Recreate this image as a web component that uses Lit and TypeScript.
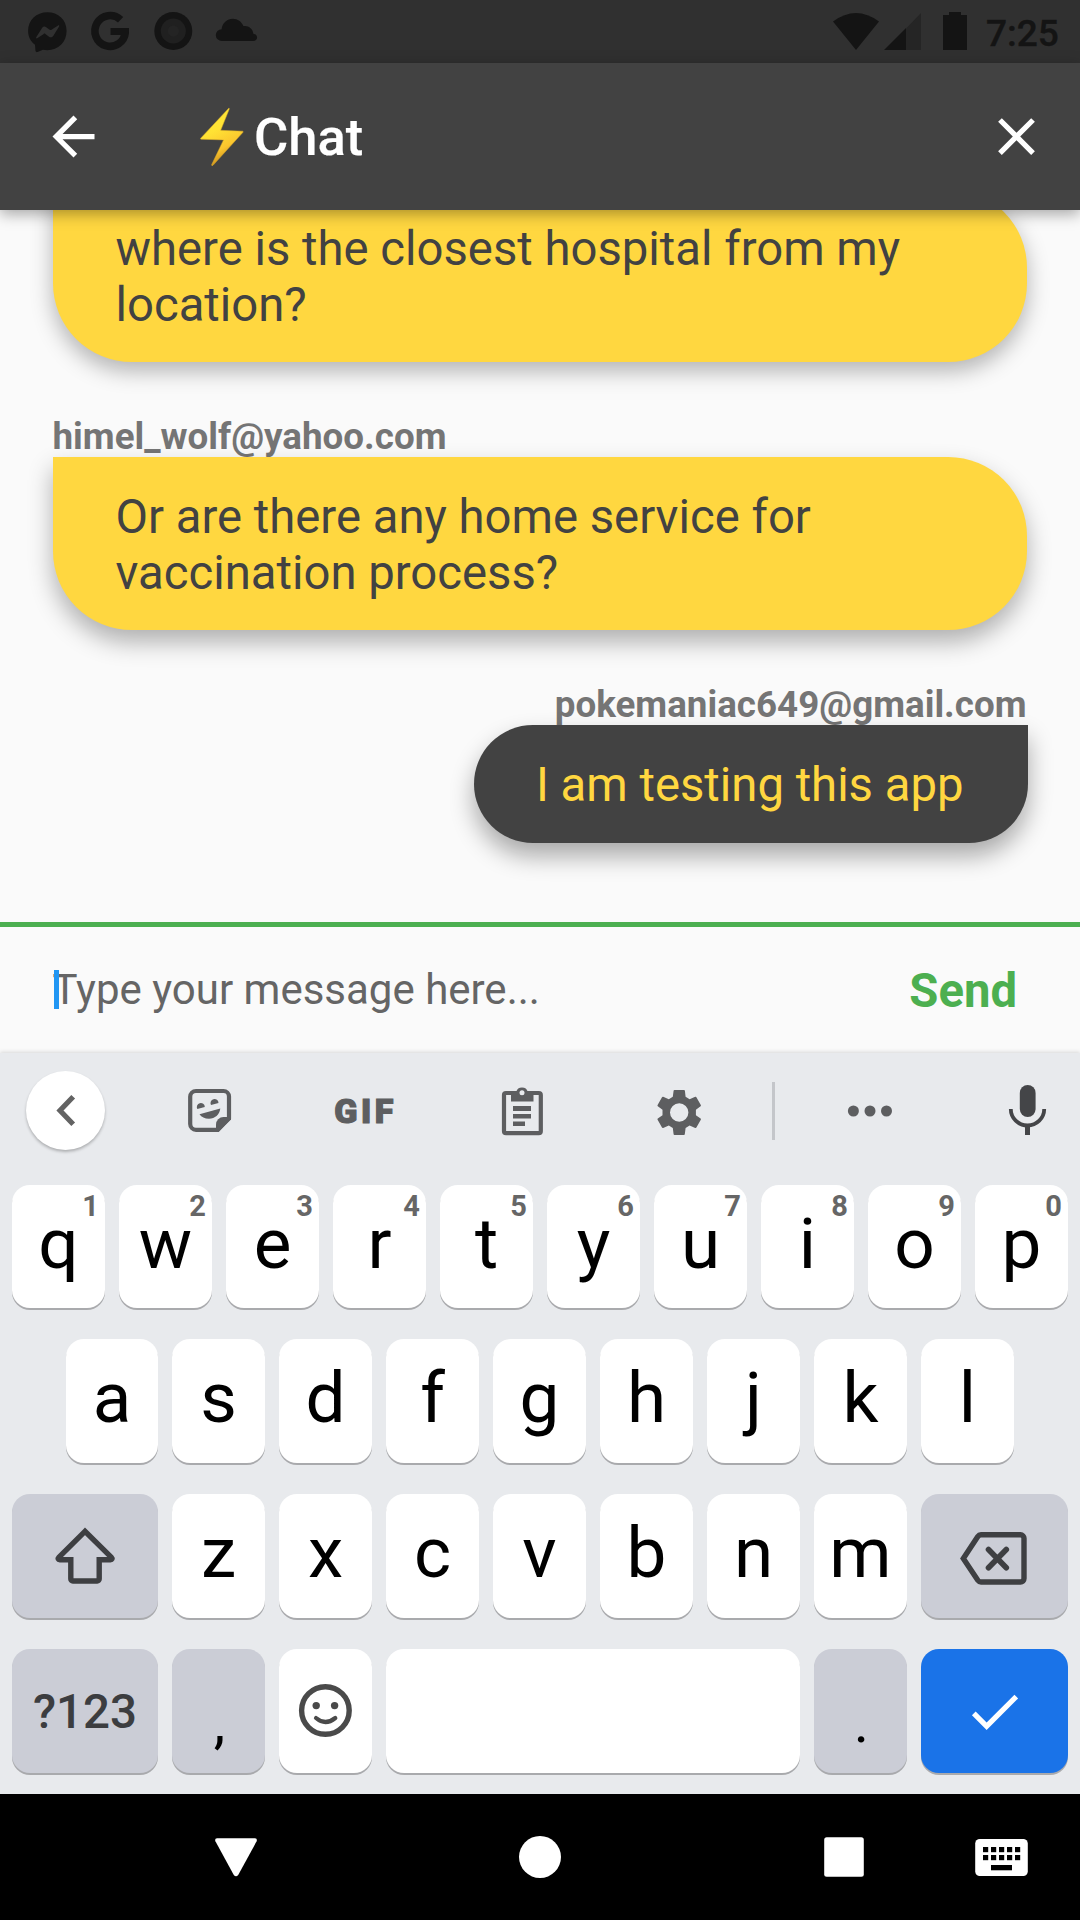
import { LitElement, html, svg, css, nothing, TemplateResult } from "lit";
import { customElement, property } from "lit/decorators.js";
import { classMap } from "lit/directives/class-map.js";

const draw = (viewBox: string, content: TemplateResult) => {
  const [, , w, h] = viewBox.split(" ");
  return html`<svg viewBox=${viewBox} width=${w} height=${h}>${content}</svg>`;
};

interface Message {
  sender?: string;
  lines: string[];
  mine?: boolean;
}

const MESSAGES: Message[] = [
  { lines: ["where is the closest hospital from my", "location?"] },
  { sender: "himel_wolf@yahoo.com", lines: ["Or are there any home service for", "vaccination process?"] },
  { sender: "pokemaniac649@gmail.com", lines: ["I am testing this app"], mine: true },
];

@customElement("status-bar")
class StatusBar extends LitElement {
  static styles = css`
    :host { display: flex; height: 63px; background: #303030; padding: 0 21px 0 28px; justify-content: space-between; font-family: Roboto, sans-serif; }
    svg { display: block; overflow: visible; fill: #141414; }
    .notifications { display: flex; gap: 24px; }
    .system { display: flex; }
    .signal { margin-left: 5px; }
    .battery { margin-left: 22px; }
    .time { margin-left: 19px; font-size: 37px; font-weight: 500; line-height: 67px; color: #141414; width: 73px; white-space: nowrap; -webkit-text-stroke: .4px #141414; }
  `;
  render() {
    return html`
      <div class="notifications">
        ${draw("28 0 39 63", svg`
          <path d="M47.3 12.3c-11 0-19.2 8-19.2 18.6 0 5.700 2.500 10.400 6.900 13.900l.4 5.500c0 1.300 1 2.200 2.200 1.700l5.300-2.200c1.400.3 2.900.4 4.400.4 11 0 19.300-8 19.300-19.200S58.300 12.300 47.300 12.300z"/>
          <path d="M36.200 37.300l6-9.500c1-1.500 2.800-1.700 4-.6l3.500 2.600c.5.400 1.200.4 1.800 0l6.600-4.400c.7-.4 1.400.3 1 1l-5.900 9.600c-1 1.500-3 1.800-4.200.7l-3.600-2.800c-.5-.4-1.200-.4-1.700 0l-6.500 4.400c-.7.4-1.400-.3-1-1z" fill="#303030"/>`)}
        ${draw("91 0 39 63", svg`
          <path d="M120.600 19.800A15.200 15.400 0 1 0 125.300 32" fill="none" stroke="#141414" stroke-width="7.600"/>
          <path d="M110.500 28h18.500v4l-1 3h-17.500z"/>`)}
        ${draw("154 0 39 63", svg`
          <circle cx="173.300" cy="31" r="19"/>
          <circle cx="173.300" cy="31" r="12.500" fill="#202020"/>
          <circle cx="173.300" cy="31" r="5.500" fill="#242424"/>`)}
        ${draw("217 0 39 63", svg`
          <path d="M221.800 41a5.900 5.900 0 0 1-.2-11.800c.6-6 5.400-10.500 11.300-10.500 4.800 0 8.800 3 10.500 7.400 5.300-.8 9.200 2.500 10 7.600 2 .2 3.700 1.800 3.700 3.700 0 2-1.700 3.600-3.900 3.600z"/>`)}
      </div>
      <div class="system">
        ${draw("833 0 46 63", svg`<path d="M833 21.500Q856 4.500 879 21.500L856 50z"/>`)}
        <div class="signal">${draw("884 0 37 63", svg`
          <path d="M906 28.500L921 13v37h-15z" fill="#252525"/><path d="M884 50L906 28v22z"/>`)}</div>
        <div class="battery">${draw("943 0 24 63", svg`<path d="M943 15h6v-3h12v3h6v35h-24z"/>`)}</div>
        <div class="time">7:25</div>
      </div>`;
  }
}

@customElement("app-header")
class AppHeader extends LitElement {
  static styles = css`
    :host { display: flex; align-items: center; height: 147px; background: #424242; padding: 0 32px 0 42px; position: relative; z-index: 2; box-shadow: 0 4px 14px rgba(0,0,0,.34); font-family: Roboto, sans-serif; box-sizing: border-box; }
    svg { display: block; }
    .bolt { margin-left: 95px; }
    .title { margin-left: 10px; font-size: 52.5px; font-weight: 500; color: #fff; line-height: 62px; flex: 1; -webkit-text-stroke: .2px #fff; }
  `;
  render() {
    return html`
      <svg width="63" height="63" viewBox="0 0 24 24" fill="#fff"><path d="M20 11H7.830l5.590-5.590L12 4l-8 8 8 8 1.410-1.410L7.830 13H20v-2z"/></svg>
      <svg class="bolt" width="44" height="60" viewBox="200 107 44 60">
        <defs><linearGradient id="glow" x1="0" y1="0" x2=".4" y2="1">
          <stop offset="0" stop-color="#fdea3a"/><stop offset=".45" stop-color="#ffe234"/><stop offset=".78" stop-color="#fbc52e"/><stop offset="1" stop-color="#c98d1d"/>
        </linearGradient></defs>
        <path d="M228.700 108.300L200.700 138.200q-.6.900.4 1L223.500 139.900 211.500 165q.3 1.200 1.500.3L243 132.300q.5-1-.4-1.100L220.700 130.300 229.300 109q.2-1-.6-.7z" fill="url(#glow)" stroke="#d9a826" stroke-width=".5"/>
      </svg>
      <div class="title">Chat</div>
      <svg width="63" height="63" viewBox="0 0 24 24" fill="#fff"><path d="M19 6.410L17.590 5 12 10.590 6.410 5 5 6.410 10.590 12 5 17.590 6.410 19 12 13.410 17.590 19 19 17.590 13.410 12z"/></svg>`;
  }
}

@customElement("message-list")
class MessageList extends LitElement {
  static styles = css`
    :host { display: flex; flex-direction: column; justify-content: flex-end; height: 711.500px; overflow: hidden; background: #fafafa; padding: 0 52.500px 78.800px; box-sizing: border-box; font-family: Roboto, sans-serif; gap: 51.700px; }
    .message { display: flex; flex-direction: column; align-items: flex-start; flex-shrink: 0; --shadow: 0 12px 24px rgba(0,0,0,.3); }
    .message:first-child { --shadow: 0 9px 22px rgba(0,0,0,.29); }
    .mine { align-items: flex-end; --shadow: 0 13px 24px rgba(0,0,0,.33); }
    .sender { font-size: 36.750px; font-weight: 700; line-height: 43px; color: #757575; padding-top: 1px; margin-bottom: -1px; }
    .mine .sender { padding-right: 1px; }
    .bubble { position: relative; padding: 31.700px 63px 29.900px; background: #ffd740; color: #424242; font-size: 47.250px; line-height: 56px; border-radius: 0 78.750px 78.750px 78.750px; box-shadow: var(--shadow); white-space: nowrap; box-sizing: border-box; align-self: stretch; margin-right: 1px; }
    .message:first-child .bubble { padding-bottom: 29.200px; padding-top: 32.400px; }
    .mine .bubble { align-self: flex-end; background: #424242; color: #ffd740; border-radius: 78.750px 0 78.750px 78.750px; margin-right: 0; padding-left: 62.500px; padding-right: 64px; }
  `;
  render() {
    return MESSAGES.map((m) => html`
      <div class=${classMap({ message: true, mine: !!m.mine })}>
        ${m.sender ? html`<div class="sender">${m.sender}</div>` : nothing}
        <div class="bubble">${m.lines.map((line) => html`<div>${line}</div>`)}</div>
      </div>`);
  }
}

@customElement("message-composer")
class MessageComposer extends LitElement {
  static styles = css`
    :host { display: flex; align-items: center; justify-content: space-between; height: 131.500px; box-sizing: border-box; border-top: 5px solid #4caf50; background: #fafafa; padding: 0 63px 0 53px; font-family: Roboto, sans-serif; }
    .field { position: relative; font-size: 42px; line-height: 50px; color: #656565; margin-left: -.5px; }
    .caret { position: absolute; left: 1px; top: 5px; width: 5.500px; height: 39px; background: #2196f3; }
    .send { font-size: 47.250px; font-weight: 700; color: #4caf50; line-height: 56px; padding-top: 2px; }
  `;
  render() {
    return html`
      <div class="field">Type your message here...<span class="caret"></span></div>
      <div class="send">Send</div>`;
  }
}

@customElement("keyboard-key")
class KeyboardKey extends LitElement {
  @property() label = "";
  @property() hint = "";
  @property({ reflect: true }) kind = "";
  static styles = css`
    :host { display: flex; position: relative; align-items: center; justify-content: center; background: #fff; border-radius: 18px; box-shadow: 0 2px 0 #a9aaad; font-family: Roboto, sans-serif; color: #000; min-width: 0; }
    :host([kind="muted"]), :host([kind="mode"]), :host([kind="mark"]) { background: #cbcdd6; }
    :host([kind="accent"]) { background: #1a73e8; }
    .label { font-size: 71px; line-height: 82px; margin-top: -7px; }
    :host([hint]) .label { margin-top: -5px; }
    :host([kind="mode"]) .label { font-size: 47.500px; font-weight: 500; color: #3c3d40; margin-top: 2px; }
    :host([kind="mark"]) .label { font-size: 58px; margin-top: 21px; padding-left: 2px; }
    .hint { position: absolute; right: 6px; top: 4px; font-size: 29px; font-weight: 700; line-height: 35px; color: #666; }
    ::slotted(svg) { display: block; }
  `;
  render() {
    return html`
      ${this.label ? html`<span class="label">${this.label}</span>` : nothing}
      ${this.hint ? html`<span class="hint">${this.hint}</span>` : nothing}
      <slot></slot>`;
  }
}

@customElement("soft-keyboard")
class SoftKeyboard extends LitElement {
  static styles = css`
    :host { display: block; position: relative; height: 741px; background: #e8eaed; box-shadow: 0 -1px 4px rgba(0,0,0,.14); box-sizing: border-box; }
    svg { display: block; overflow: visible; }
    .toolbar { display: grid; grid-template-columns: 131px 157px 153px 162px 152px 37px 156px 27px 105px; align-items: center; justify-items: center; height: 132px; padding-bottom: 17px; box-sizing: border-box; }
    .collapse { display: grid; place-items: center; width: 79px; height: 79px; border-radius: 50%; background: #fff; box-shadow: 0 2px 3px rgba(0,0,0,.25); }
    .gif { font-family: Roboto, sans-serif; font-weight: 900; font-size: 34px; line-height: 40px; letter-spacing: 3.500px; padding-left: 2px; color: #5d5e60; -webkit-text-stroke: 1.200px #5d5e60; }
    .divider { width: 3px; height: 58px; background: #c4c6ca; }
    .mic { grid-column: 9; }
    .rows { display: flex; flex-direction: column; gap: 31px; padding: 0 12px; }
    .row { display: grid; grid-auto-flow: column; column-gap: 14px; height: 124px; }
    .top { grid-template-columns: repeat(10, 93px); height: 123px; }
    .home { grid-template-columns: 92px repeat(8, 93px); padding-left: 54px; }
    .lower { grid-template-columns: 146px repeat(7, 93px) 147px; }
    .bottom { grid-template-columns: 146px 93px 93px 414px 93px 147px; }
  `;
  private letters(text: string) {
    return [...text].map((c) => html`<keyboard-key label=${c}></keyboard-key>`);
  }
  render() {
    return html`
      <div class="toolbar">
        <div class="collapse">${draw("26 1071 79 79", svg`<path d="M73.200 1096.700L60 1110.500 73.200 1124.200" fill="none" stroke="#636363" stroke-width="5.200"/>`)}</div>
        ${draw("188 1089 43 43", svg`
          <path d="M196 1091H223.500a5.500 5.500 0 0 1 5.500 5.500V1117.800L217.700 1129.800H196a5.800 5.800 0 0 1-5.800-5.800V1096.800a5.800 5.800 0 0 1 5.800-5.800z" fill="none" stroke="#5d5e60" stroke-width="4.200"/>
          <path d="M216 1131.500v-7a7.500 7.500 0 0 1 7.500-7.500h7.500v2.500l-12.500 12.500z" fill="#5d5e60"/>
          <path d="M197.300 1109a4 4 0 1 1 7.500-2zM211 1105a4 4 0 1 1 7.500-2zM199.500 1114.300L220.300 1108.500c-.8 6-5.300 10.300-11.300 10.300-4.200 0-7.500-1.600-9.500-4.500z" fill="#5d5e60"/>`)}
        <span class="gif">GIF</span>
        ${draw("502 1089 41 43", svg`
          <rect x="504" y="1093" width="36.800" height="40.200" rx="2" fill="none" stroke="#5d5e60" stroke-width="4.200"/>
          <path d="M511 1092h5.200a6 6 0 0 1 11.600 0h5.700v9.500H511z" fill="#5d5e60"/>
          <circle cx="522" cy="1092.700" r="2.500" fill="#e8eaed"/>
          <path d="M513 1106h18v5h-18zM513 1114h18v4.500h-18zM513 1121.500h12v4.500h-12z" fill="#5d5e60"/>`)}
        ${draw("657.5 1089 43 43", svg`
          <path fill-rule="evenodd" fill="#5d5e60" d="M674 1090h9.500q.8 0 .9.800l.7 6 4 2.500 5.600-2.500q.8-.3 1.200.4l4.400 7.700q.4.700-.2 1.300l-4.700 3.500v5.500l4.700 3.200q.6.500.2 1.300l-4.400 7.900q-.4.700-1.200.4l-5.600-2.600-4 2.500-.8 6.300q-.1.700-.9.700H674q-.8 0-.9-.7l-.8-6.300-4-2.500-5.600 2.600q-.8.300-1.200-.4l-4.400-7.900q-.4-.8.200-1.300l4.700-3.200v-5.500l-4.700-3.500q-.6-.6-.2-1.300l4.400-7.700q.4-.7 1.200-.4l5.600 2.500 4-2.500.8-6q.1-.8.900-.8zM678.700 1103.300a9.200 9.200 0 1 0 0 18.400 9.200 9.200 0 1 0 0-18.400z"/>`)}
        <span class="divider"></span>
        ${draw("848 1089 44 43", svg`<g fill="#5d5e60"><circle cx="853.400" cy="1111" r="5.500"/><circle cx="870" cy="1111" r="5.500"/><circle cx="886.500" cy="1111" r="5.500"/></g>`)}
        <svg class="mic" width="37" height="43" viewBox="1009 1089 37 43" fill="#444548">
          <rect x="1019.800" y="1085" width="15.800" height="32" rx="7.900"/>
          <path d="M1010.800 1109a16.700 16.500 0 0 0 33.400 0" fill="none" stroke="#444548" stroke-width="3.800"/>
          <path d="M1025 1125h5v10h-5z"/>
        </svg>
      </div>
      <div class="rows">
        <div class="row top">${[..."qwertyuiop"].map((c, i) => html`<keyboard-key label=${c} hint=${String((i + 1) % 10)}></keyboard-key>`)}</div>
        <div class="row home">${this.letters("asdfghjkl")}</div>
        <div class="row lower">
          <keyboard-key kind="muted">${draw("55 1526 60 60", svg`<path d="M85 1531.300L58.800 1557.300c-1.200 1.200-.6 2.400.9 2.400H70.800v19.300a2 2 0 0 0 2 2H97.200a2 2 0 0 0 2-2V1559.700h11.300c1.500 0 2.100-1.200.9-2.400z" fill="none" stroke="#3e3f42" stroke-width="5.400"/>`)}</keyboard-key>
          ${this.letters("zxcvbnm")}
          <keyboard-key kind="muted">${draw("961 1526 67 60", svg`<path d="M981 1534.800h39.500a3.500 3.500 0 0 1 3.500 3.500v40.200a3.500 3.500 0 0 1-3.500 3.500H981q-2 0-3.200-1.700L963.300 1558.600 977.800 1536.500q1.200-1.700 3.200-1.700z" fill="none" stroke="#3e3f42" stroke-width="5.400"/><path d="M988.500 1549.500l17.800 18.200M1006.300 1549.500l-17.800 18.200" stroke="#3e3f42" stroke-width="5.600" stroke-linecap="round"/>`)}</keyboard-key>
        </div>
        <div class="row bottom">
          <keyboard-key kind="mode" label="?123"></keyboard-key>
          <keyboard-key kind="mark" label=","></keyboard-key>
          <keyboard-key>${draw("299 1684 53 54", svg`<circle cx="325.400" cy="1710.500" r="23.800" fill="none" stroke="#4a4a4a" stroke-width="5.400"/><circle cx="316.200" cy="1705.600" r="3.700" fill="#4a4a4a"/><circle cx="334.600" cy="1705.600" r="3.700" fill="#4a4a4a"/><path d="M316 1718q9.400 8 19.300 0" fill="none" stroke="#4a4a4a" stroke-width="4.200" stroke-linecap="round"/>`)}</keyboard-key>
          <keyboard-key></keyboard-key>
          <keyboard-key kind="mark" label="."></keyboard-key>
          <keyboard-key kind="accent"><svg width="63" height="63" viewBox="0 0 24 24" fill="#fff"><path d="M9 16.170L4.830 12l-1.420 1.410L9 19 21 7l-1.410-1.410z"/></svg></keyboard-key>
        </div>
      </div>`;
  }
}

@customElement("navigation-bar")
class NavigationBar extends LitElement {
  static styles = css`
    :host { display: flex; height: 126px; background: #000; padding-left: 215px; box-sizing: border-box; }
    svg { display: block; fill: #fff; }
    .home { margin-left: 262px; }
    .recent { margin-left: 263px; }
    .input { margin-left: 111px; }
  `;
  render() {
    return html`
      ${draw("215 1794 42 126", svg`<path d="M217 1838.300H255q2.600.3 1.600 3L238.200 1875q-2.200 2.600-4.400 0L215.400 1841.300q-1-2.700 1.600-3z"/>`)}
      <div class="home">${draw("519 1794 42 126", svg`<circle cx="540" cy="1857" r="21"/>`)}</div>
      <div class="recent">${draw("824 1794 40 126", svg`<rect x="824.200" y="1837.300" width="39.600" height="39.500" rx="2.500"/>`)}</div>
      <div class="input">${draw("975 1794 53 126", svg`
        <rect x="975.200" y="1839" width="52.600" height="37" rx="4.500"/>
        <g fill="#000">
          ${[1847, 1855].map((y) => [983, 991, 999, 1007, 1015].map((x) => svg`<rect x=${x} y=${y} width="5.200" height="5.200"/>`))}
          <rect x="991" y="1865" width="21" height="5.300"/>
        </g>`)}</div>`;
  }
}

@customElement("app-root")
class AppRoot extends LitElement {
  static styles = css`
    :host { display: flex; flex-direction: column; width: 1080px; height: 1920px; overflow: hidden; background: #fafafa; }
    :host > * { flex-shrink: 0; }
  `;
  render() {
    return html`
      <status-bar></status-bar>
      <app-header></app-header>
      <message-list></message-list>
      <message-composer></message-composer>
      <soft-keyboard></soft-keyboard>
      <navigation-bar></navigation-bar>`;
  }
}
